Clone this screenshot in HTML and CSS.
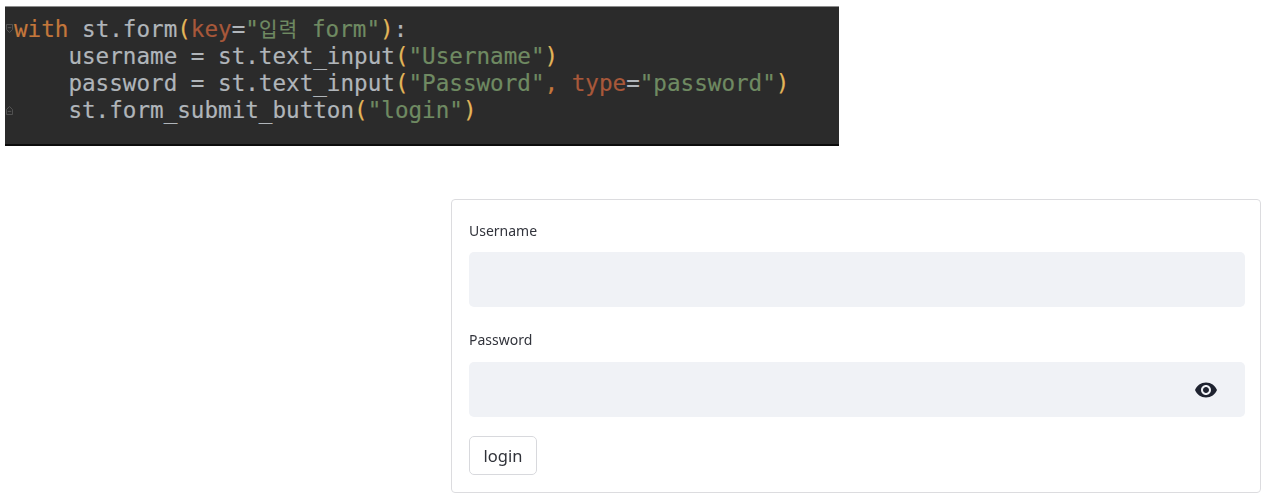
FILE: index.html
```html
<!DOCTYPE html>
<html lang="en">
<head>
<meta charset="utf-8">
<title>st.form</title>
<link rel="stylesheet" href="styles.css">
</head>
<body>
<div class="page">
  <div class="code">
    <svg class="fold fold-top" viewBox="0 0 8 10" aria-hidden="true"><path d="M0.5 0.5H7.5V6L4 9.5L0.5 6Z M2 4H6" fill="none" stroke="#5a5a5a" stroke-width="1"/></svg>
    <svg class="fold fold-bottom" viewBox="0 0 8 10" aria-hidden="true"><path d="M0.5 9.5H7.5V4L4 0.5L0.5 4Z M2 6H6" fill="none" stroke="#5a5a5a" stroke-width="1"/></svg>
    <div class="line"><span class="kw">with</span><span> st.form</span><span class="par">(</span><span class="arg">key</span><span>=</span><span class="str">"</span><span class="str ko">입력</span><span class="str"> form"</span><span class="par">)</span><span>:</span></div>
    <div class="line"><span>    username = st.text_input</span><span class="par">(</span><span class="str">"Username"</span><span class="par">)</span></div>
    <div class="line"><span>    password = st.text_input</span><span class="par">(</span><span class="str">"Password"</span><span class="kw">,</span><span> </span><span class="arg">type</span><span>=</span><span class="str">"password"</span><span class="par">)</span></div>
    <div class="line"><span>    st.form_submit_button</span><span class="par">(</span><span class="str">"login"</span><span class="par">)</span></div>
  </div>
  <form class="form">
    <label class="label">Username</label>
    <div class="input"></div>
    <label class="label label-second">Password</label>
    <div class="input input-password">
      <svg class="eye" viewBox="0 0 24 24" aria-hidden="true"><path d="M12 4.5C7 4.5 2.73 7.61 1 12c1.73 4.39 6 7.5 11 7.5s9.27-3.11 11-7.5c-1.73-4.39-6-7.5-11-7.5zM12 17c-2.76 0-5-2.24-5-5s2.24-5 5-5 5 2.24 5 5-2.24 5-5 5zm0-8c-1.66 0-3 1.34-3 3s1.34 3 3 3 3-1.34 3-3-1.34-3-3-3z" fill="#1f2330"/></svg>
    </div>
    <div class="button">login</div>
  </form>
</div>
</body>
</html>
```
FILE: styles.css
```css
html, body {
  margin: 0;
  padding: 0;
  background: #fff;
}
.page {
  width: 1268px;
  height: 500px;
  box-sizing: border-box;
  padding: 6px 0 0 5px;
  overflow: hidden;
  filter: blur(0.45px);
}
.code {
  position: relative;
  box-sizing: border-box;
  width: 834px;
  height: 140px;
  background: #2b2b2b;
  border-top: 1px solid #8c8c8c;
  border-bottom: 2px solid #0c0c0c;
  padding: 9px 0 0 9px;
}
.line {
  height: 27px;
  font-family: "DejaVu Sans Mono", monospace;
  font-size: 22.6px;
  line-height: 27px;
  white-space: pre;
  color: #b0b5ba;
  -webkit-text-stroke: 0.2px currentColor;
}
.kw { color: #c4773b; }
.par { color: #e3b659; }
.arg { color: #a8583a; }
.str { color: #6f8a62; }
.ko {
  font-family: "Noto Sans CJK KR", sans-serif;
  font-size: 20px;
  line-height: 20px;
  letter-spacing: 1.35px;
}
.fold {
  position: absolute;
  left: 1px;
  width: 7px;
  height: 9px;
}
.fold-top { top: 17px; }
.fold-bottom { top: 99px; }
.form {
  box-sizing: border-box;
  display: flex;
  flex-direction: column;
  align-items: flex-start;
  width: 810px;
  height: 294px;
  margin: 53px 0 0 446px;
  padding: 21px 15px 0 17px;
  border: 1px solid #dcdcdf;
  border-radius: 4px;
}
.label {
  font-family: "Noto Sans", sans-serif;
  font-size: 14px;
  line-height: 20px;
  color: #32343c;
}
.input {
  align-self: stretch;
  display: flex;
  align-items: center;
  justify-content: flex-end;
  height: 55px;
  margin-top: 11px;
  border-radius: 5px;
  background: #f0f2f6;
}
.label-second { margin-top: 23px; }
.input-password {
  margin-top: 12px;
  padding-right: 27px;
}
.eye {
  width: 24px;
  height: 24px;
}
.button {
  box-sizing: border-box;
  width: 68px;
  height: 39px;
  margin-top: 19px;
  border: 1px solid #d8d9dd;
  border-radius: 5px;
  font-family: "Noto Sans", sans-serif;
  font-size: 16.5px;
  line-height: 37px;
  text-align: center;
  color: #2f3138;
}
```
